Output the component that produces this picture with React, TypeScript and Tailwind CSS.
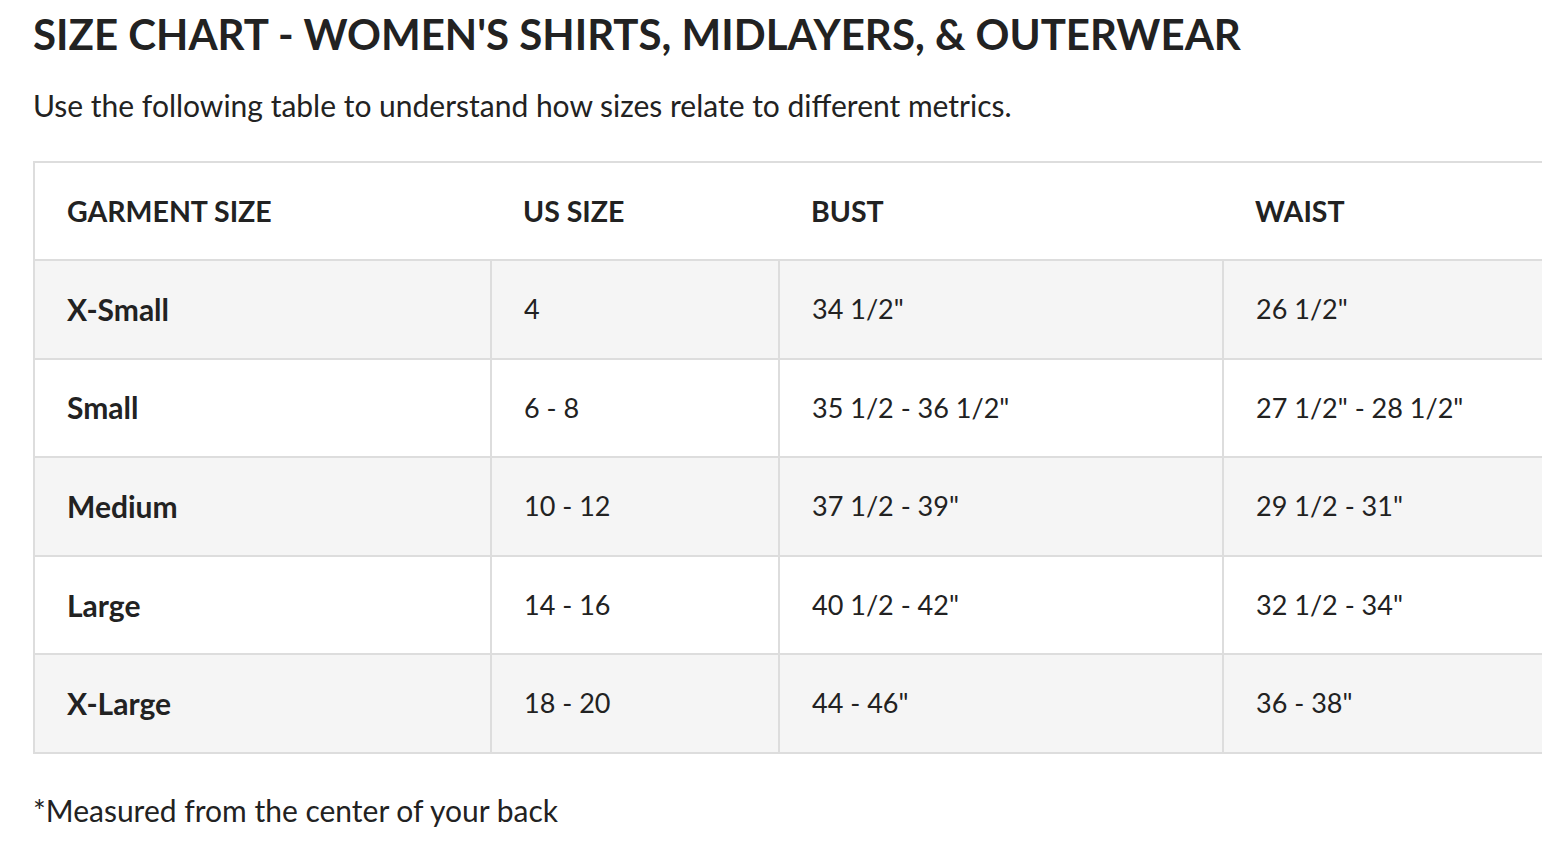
const rows = [
  ["X-Small", "4", '34 1/2"', '26 1/2"'],
  ["Small", "6 - 8", '35 1/2 - 36 1/2"', '27 1/2" - 28 1/2"'],
  ["Medium", "10 - 12", '37 1/2 - 39"', '29 1/2 - 31"'],
  ["Large", "14 - 16", '40 1/2 - 42"', '32 1/2 - 34"'],
  ["X-Large", "18 - 20", '44 - 46"', '36 - 38"'],
];

const App = () => {
  return (
    <div className="min-h-screen w-full overflow-hidden bg-white text-[#222] font-['Lato',sans-serif]">
      <div className="pl-[33px] pt-[8px]">
        {/* Heading */}
        <h1 className="text-[42px] font-bold leading-[52px] uppercase">
          Size Chart - Women's Shirts, Midlayers, &amp; Outerwear
        </h1>
        <p className="mt-[27px] text-[30px] leading-[36px]">
          Use the following table to understand how sizes relate to different metrics.
        </p>

        {/* Size table */}
        <table className="mt-[38px] w-[1700px] table-fixed border-collapse border-2 border-[#ddd]">
          <colgroup>
            <col className="w-[457px]" />
            <col className="w-[288px]" />
            <col className="w-[444px]" />
            <col />
          </colgroup>
          <thead>
            <tr className="h-[98px] bg-white">
              {["Garment Size", "US Size", "Bust", "Waist"].map((h) => (
                <th
                  key={h}
                  className="px-[32px] text-left text-[28.5px] font-bold uppercase"
                >
                  {h}
                </th>
              ))}
            </tr>
          </thead>
          <tbody>
            {rows.map((r, i) => (
              <tr
                key={r[0]}
                className={`h-[98.6px] border-t-2 border-[#ddd] ${i % 2 === 0 ? "bg-[#f5f5f5]" : "bg-white"}`}
              >
                <td className="px-[32px] text-[30px] font-bold">{r[0]}</td>
                <td className="border-l-2 border-[#ddd] px-[32px] text-[27px]">{r[1]}</td>
                <td className="border-l-2 border-[#ddd] px-[32px] text-[27px]">{r[2]}</td>
                <td className="border-l-2 border-[#ddd] px-[32px] text-[27px]">{r[3]}</td>
              </tr>
            ))}
          </tbody>
        </table>

        <p className="mt-[38px] text-[30px] leading-[36px]">*Measured from the center of your back</p>
      </div>
    </div>
  );
};

export default App;
